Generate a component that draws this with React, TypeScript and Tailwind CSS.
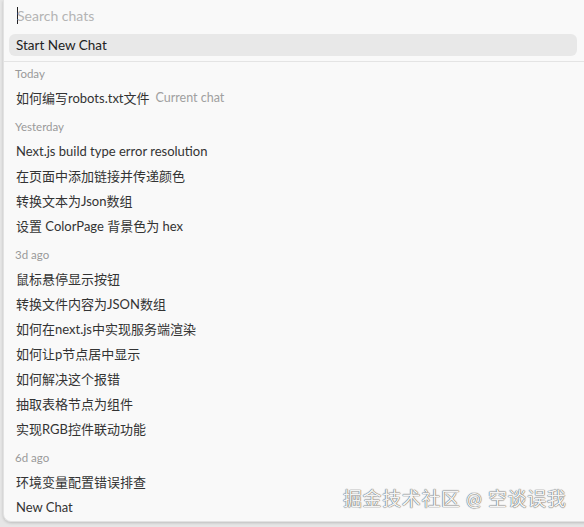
const sections: { label: string; items: { title: string; current?: boolean }[] }[] = [
  { label: "Today", items: [{ title: "如何编写robots.txt文件", current: true }] },
  {
    label: "Yesterday",
    items: [
      { title: "Next.js build type error resolution" },
      { title: "在页面中添加链接并传递颜色" },
      { title: "转换文本为Json数组" },
      { title: "设置 ColorPage 背景色为 hex" },
    ],
  },
  {
    label: "3d ago",
    items: [
      { title: "鼠标悬停显示按钮" },
      { title: "转换文件内容为JSON数组" },
      { title: "如何在next.js中实现服务端渲染" },
      { title: "如何让p节点居中显示" },
      { title: "如何解决这个报错" },
      { title: "抽取表格节点为组件" },
      { title: "实现RGB控件联动功能" },
    ],
  },
  { label: "6d ago", items: [{ title: "环境变量配置错误排查" }, { title: "New Chat" }] },
]

const font = { fontFamily: 'Lato, "Noto Sans CJK SC", sans-serif' }

export default function App() {
  return (
    <div className="relative w-[584px] h-[527px] overflow-hidden bg-[#e6e6e6]" style={font}>
      <div className="ml-[3px] h-[522px] w-[600px] rounded-bl-lg bg-[#f9f9f9] shadow-[0_1px_3px_rgba(0,0,0,0.18)] border-l border-b border-[#e2e2e2]">
        <div className="flex items-center h-[34px] pb-[3px] pl-[13px]">
          <span className="w-px h-[17px] bg-[#222]"></span>
          <span className="text-[14px] text-[#b4b4b4] -ml-px">Search chats</span>
        </div>
        <div className="pl-[5px] pr-[26px] pb-[5px] border-b border-[#e4e4e4]">
          <div className="flex items-center h-[22px] rounded-md bg-[#e8e8e8] pl-[7px] text-[13.5px] text-[#222]">
            Start New Chat
          </div>
        </div>
        <div className="flex flex-col">
          {sections.map((s, i) => (
            <div key={s.label} className="flex flex-col">
              <div className={`flex items-center h-[16px] pl-[11px] text-[11.5px] text-[#9a9a9a] ${i === 0 ? "mt-[4px] mb-[4px]" : "mt-[8px] mb-[4px]"}`}>
                {s.label}
              </div>
              {s.items.map((it, idx) => (
                <div key={`item-${idx}`} className="flex items-center gap-[6px] h-[25px] pl-[12px] text-[13px] text-[#333]">
                  <span>{it.title}</span>
                  {it.current && <span className="text-[12.5px] text-[#a0a0a0]">Current chat</span>}
                </div>
              ))}
            </div>
          ))}
        </div>
      </div>
      <div
        className="absolute left-[343px] top-[485px] text-[19px] text-[#f4f4f4] tracking-[0.6px]"
        style={{ textShadow: "0 0 1px #555, 0 0 1px #555" }}
      >
        掘金技术社区 @ 空谈误我
      </div>
    </div>
  )
}
